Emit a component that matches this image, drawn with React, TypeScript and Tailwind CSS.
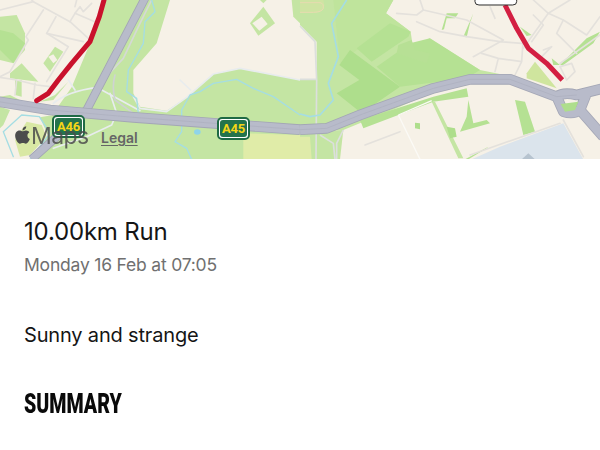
import { FaApple } from "react-icons/fa";

const G = "#c4e5a3";
const G2 = "#b5e193";
const G3 = "#aede8c";
const B = "#f6f1e7";
const W = "#e4e1dc";
const RD = "#b8bbca";
const RC = "#a3a6b5";
const WATER = "#a5dde3";

function LeftMap() {
  return (
    <g transform="scale(0.33333)">
      <path d="M315 0H510L470 130L400 210L400 280L420 320L500 332L560 292L640 222L720 205L900 240V478H90L160 340L215 262L270 130Z" fill={G} />
      <path d="M730 400L900 405V478H730Z" fill="#e0eca8" />
      <path d="M0 50L50 45L75 100L75 150L40 190L0 180Z" fill={G} />
      <path d="M0 90L40 100L75 130L40 190L0 150Z" fill={G2} />
      <path d="M30 220L65 190L115 245L30 235Z" fill={G} />
      <path d="M130 190L165 140L190 155L150 215Z" fill={G} />
      <path d="M145 170L160 163L172 180L160 190Z" fill={B} />
      <path d="M165 285L205 245L160 300L120 305Z" fill={G} />
      <path d="M0 320L30 330L10 375L0 385Z" fill={G} />
      <path d="M45 240H65V290L45 285Z" fill={G} />
      <path d="M0 290L30 285L70 305L0 300Z" fill={G} />
      <path d="M750 70L790 20L825 70L775 107Z" fill={G} />
      <path d="M757 70L785 50L803 72L778 92Z" fill={B} />
      <path d="M875 0H900V70L880 50Z" fill={G} />
      <path d="M780 0H800L790 10Z" fill={G} />
      <path d="M40 480L15 395L65 350L115 350L150 400L90 478Z" fill="#f6f1e7" />
      <path d="M60 470L45 420L80 365L125 375L140 410L90 465Z" fill="#d9e8a4" />
      <path d="M120 352L160 345V410L150 420Z" fill={G} />
      <g fill="none" stroke={W} strokeWidth="5" strokeLinecap="round" strokeLinejoin="round">
        <path d="M0 30L100 5L210 65L265 115" />
        <path d="M130 30L78 110L85 120L30 215L0 230" />
        <path d="M168 50L140 100L205 140L140 245" />
        <path d="M210 65L225 40L295 70" />
        <path d="M140 100L250 125" />
        <path d="M0 232L50 240L110 255L150 260" />
        <path d="M50 240L45 285M105 250L100 295" />
        <path d="M225 40L240 20L250 35L275 10" />
        <path d="M100 5L95 0M230 0L225 20" />
      </g>
      <g fill="none" stroke="#e8ecee" strokeWidth="5" strokeLinecap="round" strokeLinejoin="round">
        <path d="M400 290L420 325L500 335L560 292L640 222L720 205L900 240" />
        <path d="M540 240L572 270" />
        <path d="M160 310Q200 275 290 262L420 332" />
        <path d="M205 240L225 270M330 280L350 340L335 375L260 410L160 445" />
        <path d="M345 225Q335 260 345 300L400 340" stroke="#cfd3d2" />
        <path d="M455 0L420 70L370 175L300 250" stroke="#d5d9d5" />
      </g>
      <g fill="none" stroke={WATER} strokeWidth="4" strokeLinecap="round" strokeLinejoin="round">
        <path d="M455 0L465 35L435 65L430 130L385 210L380 275L410 295L415 340" />
        <path d="M900 345L820 290L760 265L710 238L640 250L600 275L570 285L545 330L545 395L525 425L560 445L575 478" />
        <path d="M10 395L65 345L118 350L150 400L90 478M10 395L40 470" />
      </g>
      <ellipse cx="592" cy="396" rx="10" ry="8" fill="#8fd4ea" />
      <g fill="none" strokeLinejoin="round">
        <path d="M435 -5L260 330L95 478" stroke={RC} strokeWidth="26" />
        <path d="M435 -5L260 330L95 478" stroke={RD} strokeWidth="21" />
        <path d="M-10 304L150 330L400 352L900 389" stroke={RC} strokeWidth="32" />
        <path d="M-10 304L150 330L400 352L900 389" stroke={RD} strokeWidth="27" />
        <path d="M-10 304L150 330L400 352L900 389" stroke={RC} strokeWidth="2" opacity="0.6" />
      </g>
      <path d="M312 0L298 50L270 125L215 190L175 240L145 280L110 302" fill="none" stroke="#c9112c" strokeWidth="15" strokeLinejoin="round" strokeLinecap="round" />
    </g>
  );
}

function RightMap() {
  return (
    <g transform="translate(300 0) scale(0.33333)">
      <path d="M0 0H280L258 40L332 95L340 150L388 115L540 210L640 230H500L300 320L130 390L0 395Z" fill={G} />
      <path d="M100 0H280L258 40L332 95L170 150L120 190Z" fill="#bfe49c" />
      <path d="M170 145L270 70L332 95L325 110L215 185Z" fill={G2} />
      <path d="M150 150L300 260L185 340L110 280L178 240L118 195Z" fill={G3} />
      <path d="M230 200L330 130L390 115L540 210L500 235L300 260Z" fill={G2} />
      <path d="M295 135L335 120L345 150L390 160L380 190L290 160Z" fill="#b7e095" />
      <path d="M0 75L50 125V240H0Z" fill={B} />
      <path d="M0 0H70Q80 30 50 37H0Z" fill="#cfe4a3" />
      <path d="M0 8H60Q72 10 70 25Q65 37 40 37H0" fill="none" stroke="#e8dbb0" strokeWidth="3" />
      <path d="M0 395L130 390L120 478H0Z" fill={G} />
      <path d="M0 410H30L35 478H0Z" fill="#dfeba9" />
      <path d="M180 360L400 290L500 265L505 290L400 305L190 385Z" fill={G2} />
      <path d="M645 300L675 305L705 395L670 405Z" fill={G2} />
      <path d="M680 220L705 185L770 265L680 235Z" fill="#cfe59e" />
      <path d="M755 175L780 195L860 115L900 95L880 130L790 195L760 195Z" fill={G2} />
      <path d="M425 90L440 40H475L465 55L440 55L432 88ZM490 110L520 40L510 70L500 112Z" fill={G2} />
      <path d="M660 80L695 105L680 108Z" fill={G2} />
      <path d="M395 305L405 305L490 475L475 475Z" fill={G} />
      <path d="M345 368L360 370L360 388L345 385ZM440 380L465 385L470 410L450 415Z" fill={G3} />
      <path d="M505 300L520 370L560 360L570 370L480 395L500 350ZM495 478L565 440L560 445L505 478Z" fill={G2} />
      <path d="M515 478L600 440L790 370L850 478Z" fill="#dbe4ec" />
      <path d="M665 478L685 460L705 478Z" fill="#b6c3cf" />
      <g fill="none" stroke={W} strokeWidth="5" strokeLinecap="round" strokeLinejoin="round">
        <path d="M360 0L370 30L350 45L290 40" />
        <path d="M370 30L500 60L610 120L520 170M350 65L420 95L500 110L600 125L665 130" />
        <path d="M545 160L595 175L665 185L645 225M595 175L585 215M665 185L670 110" />
        <path d="M700 0L745 40L670 145M745 40L810 0M790 60L860 105L900 50M745 40L790 60L770 100L830 160" />
        <path d="M700 45L730 75L695 125M730 150L755 140L720 175" />
        <path d="M780 200L815 190L825 215L800 240L780 200" />
        <path d="M570 20L585 55" />
        <path d="M780 190L900 105" />
        <path d="M195 435L300 395" />
        <path d="M790 360L850 470M780 370L510 465" />
      </g>
      <g fill="none" stroke="#fbfaf6" strokeWidth="4" strokeLinejoin="round">
        <path d="M295 345L395 302M295 345L360 478" />
      </g>
      <g fill="none" stroke="#dcdfdd" strokeWidth="5" strokeLinejoin="round">
        <path d="M0 78L45 125L50 240L48 478M0 238H50" />
        <path d="M130 390L110 430L110 478M60 405L100 430L105 478" />
      </g>
      <path d="M140 0L95 70L115 170L85 250L100 300L60 345L30 350L0 342" fill="none" stroke={WATER} strokeWidth="5" strokeLinejoin="round" />
      <g fill="none" strokeLinejoin="round">
        <path d="M0 389L80 385L180 345L400 265L510 238L630 238L770 290L790 335Q820 345 840 330L910 410M770 290Q790 275 830 285L910 265M840 330L860 280" stroke={RC} strokeWidth="32" />
        <path d="M0 389L80 385L180 345L400 265L510 238L630 238L770 290L790 335Q820 345 840 330L910 410M770 290Q790 275 830 285L910 265M840 330L860 280" stroke={RD} strokeWidth="27" />
        <path d="M0 389L80 385L180 345L400 265L510 238L630 238L770 290L830 285" stroke={RC} strokeWidth="2" opacity="0.6" />
      </g>
      <path d="M782 312L835 305L825 330L795 335Z" fill={G3} />
      <path d="M615 15L650 85L685 145L740 190L787 240" fill="none" stroke="#d31f42" strokeWidth="15" strokeLinejoin="round" />
      <path d="M525 -20H650V5Q650 15 638 15H537Q525 15 525 5Z" fill="#fff" stroke="#2c2c2c" strokeWidth="3" />
    </g>
  );
}

function Shield({ label }: { label: string }) {
  return (
    <div className="flex h-[23px] w-[33px] items-center justify-center rounded-[5px] border-[2px] border-[#1f6a45] bg-white p-[1px]">
      <span className="flex h-full w-full items-center justify-center rounded-[3px] bg-[#24734c] font-['Roboto',sans-serif] text-[13px] font-bold tracking-[-0.3px] text-[#f5d617]">
        {label}
      </span>
    </div>
  );
}

export default function App() {
  return (
    <div className="h-[450px] w-[600px] overflow-hidden bg-white">
      <div className="relative h-[159px] w-full overflow-hidden bg-[#f6f1e7]">
        <svg viewBox="0 0 600 159" className="block h-[159px] w-[600px] blur-[0.5px]">
          <LeftMap />
          <RightMap />
        </svg>
        <div className="absolute left-[52px] top-[115px]">
          <Shield label="A46" />
        </div>
        <div className="absolute left-[217px] top-[117px]">
          <Shield label="A45" />
        </div>
        <div className="absolute left-[14px] top-[122px] flex h-[28px] items-center text-[#4c4c4c]">
          <FaApple className="h-[20px] w-[17px] -translate-y-[1px]" />
          <span className="font-['Inter',sans-serif] text-[23px] leading-none tracking-[-0.6px] opacity-85">Maps</span>
        </div>
        <span className="absolute left-[101px] top-[129px] font-['Inter',sans-serif] text-[14px] font-semibold leading-[17px] text-[#666666] underline underline-offset-2">
          Legal
        </span>
      </div>
      <div className="px-6 pt-[58px] font-['Inter',sans-serif]">
        <h1 className="text-[24px] font-normal leading-[30px] tracking-[-0.2px] text-[#151515]">10.00km Run</h1>
        <p className="mt-[6px] text-[17.5px] leading-[24px] tracking-[-0.2px] text-[#707070]">Monday 16 Feb at 07:05</p>
        <p className="mt-[44px] text-[20px] leading-[28px] tracking-[-0.17px] text-[#151515]">Sunny and strange</p>
        <h2 className="mt-[39px] origin-left scale-x-[0.7] whitespace-nowrap font-['Roboto',sans-serif] text-[28px] font-black leading-[32px] text-[#0a0a0a]">
          SUMMARY
        </h2>
      </div>
    </div>
  );
}
